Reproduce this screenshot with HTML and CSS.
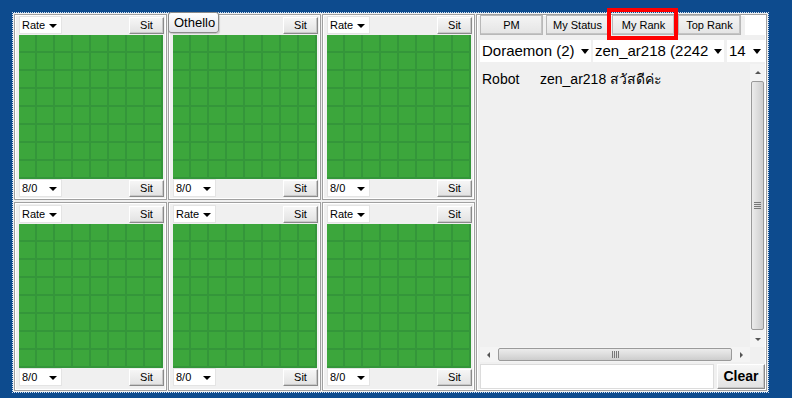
FILE: index.html
```html
<!DOCTYPE html>
<html>
<head>
<meta charset="utf-8">
<link rel="stylesheet" href="styles.css">
</head>
<body>
<div class="frame">
  <div class="col">
    <div class="panel">
      <div class="bar"><div class="sel"><span>Rate</span><i class="arr"></i></div><div class="sit">Sit</div></div>
      <div class="board"></div>
      <div class="bar"><div class="sel"><span>8/0</span><i class="arr"></i></div><div class="sit">Sit</div></div>
    </div>
    <div class="panel low">
      <div class="bar"><div class="sel"><span>Rate</span><i class="arr"></i></div><div class="sit">Sit</div></div>
      <div class="board"></div>
      <div class="bar"><div class="sel"><span>8/0</span><i class="arr"></i></div><div class="sit">Sit</div></div>
    </div>
  </div>
  <div class="col">
    <div class="panel">
      <div class="bar"><div class="sel"><span class="covered">Rate</span><i class="arr"></i></div><div class="sit">Sit</div></div>
      <div class="board"></div>
      <div class="bar"><div class="sel"><span>8/0</span><i class="arr"></i></div><div class="sit">Sit</div></div>
    </div>
    <div class="panel low">
      <div class="bar"><div class="sel"><span>Rate</span><i class="arr"></i></div><div class="sit">Sit</div></div>
      <div class="board"></div>
      <div class="bar"><div class="sel"><span>8/0</span><i class="arr"></i></div><div class="sit">Sit</div></div>
    </div>
  </div>
  <div class="col">
    <div class="panel">
      <div class="bar"><div class="sel"><span>Rate</span><i class="arr"></i></div><div class="sit">Sit</div></div>
      <div class="board"></div>
      <div class="bar"><div class="sel"><span>8/0</span><i class="arr"></i></div><div class="sit">Sit</div></div>
    </div>
    <div class="panel low">
      <div class="bar"><div class="sel"><span>Rate</span><i class="arr"></i></div><div class="sit">Sit</div></div>
      <div class="board"></div>
      <div class="bar"><div class="sel"><span>8/0</span><i class="arr"></i></div><div class="sit">Sit</div></div>
    </div>
  </div>
  <div class="side">
    <div class="tabs">
      <div class="tab">PM</div>
      <div class="tab">My Status</div>
      <div class="tab">My Rank</div>
      <div class="tab">Top Rank</div>
      <div class="tabrest"></div>
    </div>
    <div class="drops">
      <div class="bsel s1"><span>Doraemon (2)</span><i class="barr"></i></div>
      <div class="bsel s2"><span>zen_ar218 (2242</span><i class="barr"></i></div>
      <div class="bsel s3"><span>14</span><i class="barr"></i></div>
    </div>
    <div class="chat">
      <div class="msgs">
        <div class="msg"><span class="who">Robot</span><span>zen_ar218 สวัสดีค่ะ</span></div>
      </div>
      <div class="vbar">
        <div class="vbtn"><i class="up"></i></div>
        <div class="vthumb"><i class="grip"></i></div>
        <div class="vbtn"><i class="down"></i></div>
      </div>
      <div class="hbar">
        <div class="hbtn"><i class="left"></i></div>
        <div class="hthumb"><i class="hgrip"></i></div>
        <div class="hbtn"><i class="right"></i></div>
      </div>
      <div class="corner"></div>
    </div>
    <div class="inrow">
      <div class="input"></div>
      <div class="clear">Clear</div>
    </div>
  </div>
</div>
<div class="tip">Othello</div>
<div class="mark"></div>
</body>
</html>
```
FILE: styles.css
```css
html, body {
  margin: 0;
  padding: 0;
  background: #0d4b8e;
  font-family: "Liberation Sans", Arial, sans-serif;
  color: #000;
}
body {
  width: 792px;
  height: 398px;
  overflow: hidden;
  position: relative;
}
.frame {
  box-sizing: border-box;
  margin: 12px 0 0 12px;
  width: 757px;
  height: 381px;
  border: 1px dotted #cfe0f2;
  background: #f0f0f0;
  background-clip: padding-box;
  padding: 1px;
  display: flex;
  gap: 1px;
}
.col {
  width: 153px;
  display: flex;
  flex-direction: column;
  gap: 2px;
}
.panel {
  box-sizing: border-box;
  height: 186px;
  border: 1px solid #a0a0a0;
  box-shadow: inset 0 0 0 1px #fff;
  background: #f0f0f0;
  padding: 1px 2px 1px 4px;
  display: flex;
  flex-direction: column;
}
.panel.low {
  height: 189px;
  padding-top: 2px;
  padding-bottom: 2px;
}
.bar {
  height: 19px;
  display: flex;
  justify-content: space-between;
  align-items: flex-start;
}
.sel {
  box-sizing: border-box;
  width: 43px;
  height: 18px;
  background: #fff;
  border: 1px solid #e4e4e4;
  font-size: 11px;
  line-height: 16px;
  padding-left: 2px;
  display: flex;
  align-items: center;
  justify-content: space-between;
  padding-right: 4px;
}
.covered {
  visibility: hidden;
}
.arr {
  width: 0;
  height: 0;
  border-left: 4px solid transparent;
  border-right: 4px solid transparent;
  border-top: 4px solid #000;
  margin-top: 2px;
}
.sit {
  box-sizing: border-box;
  width: 35px;
  height: 17px;
  margin-top: 1px;
  background: linear-gradient(#f6f6f6, #e2e2e2);
  border: 1px solid;
  border-color: #fff #8a8a8a #8a8a8a #fff;
  box-shadow: inset -1px -1px 0 #c8c8c8;
  font-size: 11px;
  line-height: 15px;
  text-align: center;
}
.board {
  width: 144px;
  height: 144px;
  background-color: #3ca63c;
  background-image:
    repeating-linear-gradient(to right, transparent 0, transparent 16px, #34963a 16px, #34963a 18px),
    repeating-linear-gradient(to bottom, transparent 0, transparent 16px, #34963a 16px, #34963a 18px);
}
.side {
  flex: 1;
  box-sizing: border-box;
  border: 1px solid #a0a0a0;
  box-shadow: inset 0 0 0 1px #fff;
  background: #f0f0f0;
  padding: 0 1px 0 3px;
  display: flex;
  flex-direction: column;
}
.tabs {
  height: 20px;
  display: flex;
  gap: 3px;
}
.tab {
  box-sizing: border-box;
  width: 63px;
  height: 20px;
  background: linear-gradient(#f4f4f4, #e4e4e4);
  border: 1px solid;
  border-color: #fff #8c8c8c #8c8c8c #fff;
  box-shadow: inset -1px -1px 0 #c4c4c4;
  outline: 1px solid #b8b8b8;
  outline-offset: -1px;
  font-size: 11px;
  line-height: 18px;
  text-align: center;
}
.tabrest {
  flex: 1;
  background: #fff;
  margin-left: 1px;
}
.drops {
  margin-top: 5px;
  height: 22px;
  display: flex;
  gap: 2px;
}
.bsel {
  box-sizing: border-box;
  height: 22px;
  background: #fff;
  font-size: 15px;
  line-height: 22px;
  padding: 0 4px 0 2px;
  display: flex;
  align-items: center;
  justify-content: space-between;
  overflow: hidden;
  white-space: nowrap;
}
.s1 { width: 111px; }
.s2 { width: 131px; }
.s3 { flex: 1; margin-left: 1px; }
.barr {
  flex: none;
  width: 0;
  height: 0;
  border-left: 4px solid transparent;
  border-right: 4px solid transparent;
  border-top: 5px solid #000;
  margin-left: 6px;
}
.chat {
  margin-top: 2px;
  height: 298px;
  display: grid;
  grid-template-columns: 1fr 15px;
  grid-template-rows: 1fr 15px;
  background: #f0f0f0;
}
.msgs {
  padding: 4px 2px 0 2px;
  font-size: 14px;
}
.msg .who {
  display: inline-block;
  width: 58px;
}
.vbar {
  display: flex;
  flex-direction: column;
  background: #f4f4f4;
}
.vbtn {
  height: 16px;
  display: flex;
  align-items: center;
  justify-content: center;
}
.up, .down, .left, .right {
  width: 0;
  height: 0;
}
.up {
  border-left: 3px solid transparent;
  border-right: 3px solid transparent;
  border-bottom: 3px solid #555;
}
.down {
  border-left: 3px solid transparent;
  border-right: 3px solid transparent;
  border-top: 3px solid #555;
}
.left {
  border-top: 3px solid transparent;
  border-bottom: 3px solid transparent;
  border-right: 3px solid #555;
}
.right {
  border-top: 3px solid transparent;
  border-bottom: 3px solid transparent;
  border-left: 3px solid #555;
}
.vthumb {
  flex: 1;
  margin: 1px;
  border: 1px solid #9a9a9a;
  border-radius: 2px;
  background: linear-gradient(to right, #ececec, #dadada 60%, #cdcdcd);
  display: flex;
  align-items: center;
  justify-content: center;
}
.grip {
  width: 7px;
  height: 7px;
  background: repeating-linear-gradient(to bottom, #777 0, #777 1px, transparent 1px, transparent 2px);
}
.hbar {
  display: flex;
  background: #f4f4f4;
}
.hbtn {
  width: 17px;
  display: flex;
  align-items: center;
  justify-content: center;
}
.hthumb {
  flex: 1;
  margin: 1px;
  border: 1px solid #9a9a9a;
  border-radius: 2px;
  background: linear-gradient(to bottom, #ececec, #dadada 60%, #cdcdcd);
  display: flex;
  align-items: center;
  justify-content: center;
}
.hgrip {
  width: 7px;
  height: 7px;
  background: repeating-linear-gradient(to right, #777 0, #777 1px, transparent 1px, transparent 2px);
}
.corner {
  background: #f0f0f0;
}
.inrow {
  margin-top: 2px;
  height: 25px;
  display: flex;
  gap: 3px;
}
.input {
  width: 234px;
  box-sizing: border-box;
  background: #fff;
  border: 1px solid #dcdcdc;
}
.clear {
  flex: 1;
  box-sizing: border-box;
  background: linear-gradient(#f6f6f6, #e2e2e2);
  border: 1px solid;
  border-color: #fff #8a8a8a #8a8a8a #fff;
  box-shadow: inset -1px -1px 0 #c8c8c8;
  font-size: 14px;
  font-weight: bold;
  line-height: 23px;
  text-align: center;
}
.tip {
  position: absolute;
  left: 168px;
  top: 12px;
  box-sizing: border-box;
  width: 51px;
  height: 21px;
  border: 1px solid #8c8c8c;
  border-radius: 3px;
  background: linear-gradient(#ffffff, #e4e4ea);
  font-size: 13px;
  line-height: 19px;
  padding-left: 5px;
  box-shadow: 1px 1px 1px rgba(0,0,0,0.15);
}
.mark {
  position: absolute;
  left: 607px;
  top: 8px;
  box-sizing: border-box;
  width: 71px;
  height: 32px;
  border: 4px solid #f00;
}
```
